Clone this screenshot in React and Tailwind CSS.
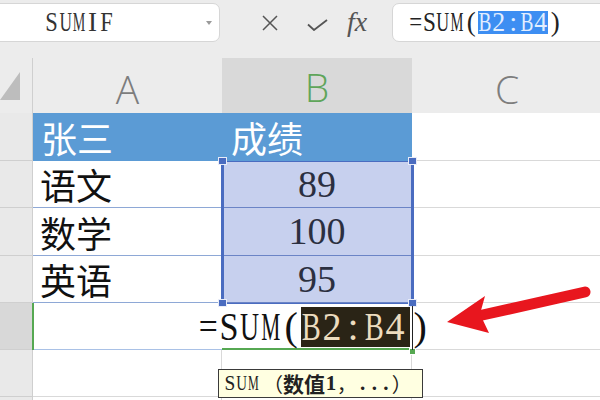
const ADV = {
  "=": 0.564, S: 0.556, U: 0.722, M: 0.889, "(": 0.333, ")": 0.333, B: 0.667,
  "2": 0.5, ":": 0.278, "4": 0.5, I: 0.333, F: 0.556, "1": 0.5, ".": 0.25, " ": 0.25,
};

function Glyphs({ text, w, size, fill = 0.92 }) {
  return text.split("").map((c, i) => {
    const adv = (ADV[c] ?? 0.5) * size;
    const k = Math.min(1, (fill * w) / adv);
    return (
      <span key={i} className="inline-flex justify-center shrink-0" style={{ width: w }}>
        <span className="inline-block" style={{ transform: `scaleX(${k})` }}>
          {c === " " ? "\u00a0" : c}
        </span>
      </span>
    );
  });
}

export default function App() {
  const hdr = "bg-[#e9e9e9] border-r border-b border-[#cfcfcf]";
  const cjk = "font-['Noto_Sans_CJK_SC',sans-serif]";
  const serif = "font-['Liberation_Serif',serif]";
  const colLetter = "flex items-center justify-center text-[39px] font-light font-['Open_Sans','Liberation_Sans',sans-serif]";
  return (
    <div className="relative w-[600px] h-[400px] overflow-hidden bg-white font-['Liberation_Sans',sans-serif]">
      {/* toolbar */}
      <div className="h-[58px] bg-[#ececec] flex items-start pt-[3px]">
        <div className="ml-[-10px] w-[230px] h-[39px] shrink-0 bg-white border border-[#d6d6d6] rounded-[7px] flex items-center">
          <div className={`pl-[54px] flex items-center text-[27px] leading-none text-[#333] ${serif}`}>
            <Glyphs text="SUMIF" w={13.6} size={27} />
          </div>
          <div className="ml-auto mr-[7px] w-0 h-0 border-l-[3px] border-r-[3px] border-t-[4px] border-l-transparent border-r-transparent border-t-[#9a9a9a]" />
        </div>
        <div className="flex items-center h-[39px] shrink-0">
          <svg className="ml-[41px]" width="18" height="18" viewBox="0 0 18 18">
            <path d="M2 2 L16 16 M16 2 L2 16" stroke="#555" strokeWidth="1.5" fill="none" />
          </svg>
          <svg className="ml-[28px] mt-[4px]" width="21" height="12" viewBox="0 0 21 12">
            <path d="M1 5.5 L7 11 L20 1" stroke="#555" strokeWidth="1.8" fill="none" />
          </svg>
          <div className={`ml-[19px] italic text-[28px] leading-none text-[#555] mt-[-2px] ${serif}`}>fx</div>
        </div>
        <div className="ml-[25px] w-[230px] h-[39px] shrink-0 bg-white border border-[#d6d6d6] rounded-l-[7px] flex items-center">
          <div className={`pl-[15px] flex items-center text-[27px] leading-none text-[#222] whitespace-nowrap ${serif}`}>
            <Glyphs text="=SUM(" w={14} size={27} />
            <span className="inline-flex items-center h-[23px] bg-[#3d8ef2] text-[#e3eeff]">
              <Glyphs text="B2:B4" w={14} size={27} />
            </span>
            <Glyphs text=")" w={14} size={27} />
          </div>
        </div>
      </div>

      {/* column header */}
      <div className="grid grid-cols-[33px_189px_190px_190px] h-[55px] bg-[#ececec]">
        <div className="border-r border-[#cfcfcf] relative">
          <div className="absolute left-0 top-[14px] w-0 h-0 border-b-[28px] border-l-[20px] border-b-[#bdbdbd] border-l-transparent" />
        </div>
        <div className={`${colLetter} text-[#7d7d7d]`}>A</div>
        <div className={`${colLetter} text-[#5fa55a] bg-[#d9d9d9] border-b-[3px] border-[#4caf50]`}>B</div>
        <div className={`${colLetter} text-[#7d7d7d]`}>C</div>
      </div>

      {/* body */}
      <div className="grid grid-cols-[33px_189px_190px_190px] grid-rows-[48px_47px_48px_47px_47px_47px_20px]">
        {/* row 1 */}
        <div className={hdr} />
        <div className={`bg-[#5b9bd5] text-white text-[36px] pl-[8px] flex items-center ${cjk}`}>张三</div>
        <div className={`bg-[#5b9bd5] text-white text-[36px] pl-[9px] flex items-center ${cjk}`}>成绩</div>
        <div className="border-b border-[#d9d9d9]" />

        {/* rows 2-4 */}
        {[
          ["语文", "89"],
          ["数学", "100"],
          ["英语", "95"],
        ].map(([a, b]) => (
          <div key={a} className="contents">
            <div className={hdr} />
            <div className={`border-b border-[#8ea8d6] text-[36px] pl-[7px] flex items-center text-[#111] ${cjk}`}>{a}</div>
            <div className={`bg-[#c7d0ee] border-b border-[#6b84c6] flex items-center justify-center text-[38px] text-[#2b2f40] ${serif}`}>
              {b}
            </div>
            <div className="border-b border-[#d9d9d9]" />
          </div>
        ))}

        {/* row 5 */}
        <div className="bg-[#d8d8d8] border-r border-b border-[#cfcfcf]" />
        <div className="border-b border-[#a9c1e6]" />
        <div className="border-b-2 border-[#56a852]" />
        <div className="border-b border-[#d9d9d9]" />

        {/* row 6 */}
        <div className={hdr} />
        <div className="border-r border-b border-[#d9d9d9]" />
        <div className="border-r border-b border-[#d9d9d9]" />
        <div className="border-b border-[#d9d9d9]" />

        {/* row 7 */}
        <div className={hdr} />
        <div className="border-r border-[#d9d9d9]" />
        <div className="border-r border-[#d9d9d9]" />
        <div />
      </div>

      {/* selection of B2:B4 */}
      <div className="absolute left-[221px] top-[161px] w-[193px] h-[143px] border-x-[3px] border-y border-[#4a6cc0]" />
      <div className="absolute left-[218px] top-[157px] w-[9px] h-[8px] bg-[#4a6cc0] border border-[#e8ecf8]" />
      <div className="absolute left-[408px] top-[157px] w-[9px] h-[8px] bg-[#4a6cc0] border border-[#e8ecf8]" />
      <div className="absolute left-[218px] top-[299px] w-[9px] h-[8px] bg-[#4a6cc0] border border-[#e8ecf8]" />
      <div className="absolute left-[408px] top-[299px] w-[9px] h-[8px] bg-[#4a6cc0] border border-[#e8ecf8]" />

      {/* active cell marks */}
      <div className="absolute left-[32px] top-[303px] w-[2px] h-[47px] bg-[#56a852]" />
      <div className="absolute left-[409px] top-[348px] w-[7px] h-[7px] bg-[#56a852] border border-white" />

      {/* in-cell formula */}
      <div className={`absolute left-[198px] top-[303px] h-[47px] flex items-center text-[40px] leading-none text-[#111] whitespace-nowrap ${serif}`}>
        <Glyphs text="=SUM(" w={20.7} size={40} />
        <span className="inline-flex items-center h-[40px] pr-[5px] bg-[#2a2416] text-[#ecdcbf]">
          <Glyphs text="B2:B4" w={20.7} size={40} />
        </span>
        <Glyphs text=")" w={20.7} size={40} />
      </div>
      <div className="absolute left-[412px] top-[306px] w-[1px] h-[44px] bg-[#222]" />

      {/* tooltip */}
      <div className="absolute left-[218px] top-[369px] w-[205px] h-[29px] bg-[#ffffe1] border border-[#3a3a3a] flex items-center pl-[5px] overflow-hidden whitespace-nowrap text-[#222]">
        <span className={`flex items-center text-[21px] leading-none ${serif}`}>
          <Glyphs text="SUM" w={11.7} size={21} />
        </span>
        <span className={`${cjk} text-[20px] leading-none ml-[4px]`}>（</span>
        <span className={`${cjk} text-[21px] leading-none font-bold`}>数值</span>
        <span className={`flex items-center text-[21px] leading-none font-bold ${serif}`}>
          <Glyphs text="1" w={11.7} size={21} />
        </span>
        <span className={`${cjk} text-[20px] leading-none`}>，</span>
        <span className={`flex items-center text-[21px] leading-none font-bold ${serif}`}>
          <Glyphs text="..." w={11.7} size={21} />
        </span>
        <span className={`${cjk} text-[20px] leading-none`}>）</span>
      </div>

      {/* red arrow */}
      <svg className="absolute left-0 top-0 pointer-events-none" width="600" height="400" viewBox="0 0 600 400">
        <path d="M585 292 L478 316" stroke="#e8161e" strokeWidth="11" strokeLinecap="round" fill="none" />
        <path d="M447 322 L485 296 L480 314 L489 333 Z" fill="#e8161e" />
      </svg>
    </div>
  );
}
